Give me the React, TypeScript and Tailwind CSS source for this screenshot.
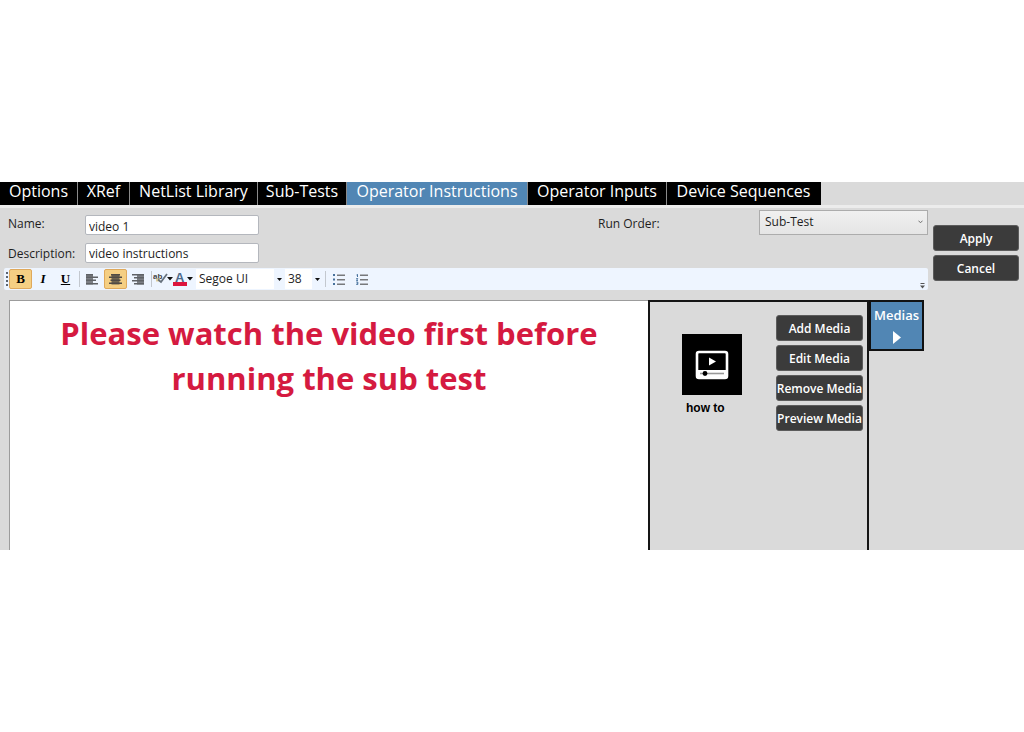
import React from 'react'

const tabs = [
	{ label: 'Options', width: 'w-[78px]' },
	{ label: 'XRef', width: 'w-[52px]' },
	{ label: 'NetList Library', width: 'w-[128px]' },
	{ label: 'Sub-Tests', width: 'w-[89px]' },
	{ label: 'Operator Instructions', width: 'w-[181px]' },
	{ label: 'Operator Inputs', width: 'w-[139px]' },
	{ label: 'Device Sequences', width: 'w-[154px]' },
]

const mediaActions = ['Add Media', 'Edit Media', 'Remove Media', 'Preview Media']

const App = () => {
	return (
		<div className="flex min-h-screen items-center bg-white font-['Open_Sans',sans-serif] text-[#1e1e1e]">
			<div className="flex w-full flex-col bg-[#dadada]">
				<TabBar />
				<div className="flex">
					<main className="min-w-0 flex-1">
						<InstructionForm />
						<Toolbar />
						<Workspace />
					</main>
					<div className="flex w-24 flex-col gap-1 px-[5px] pt-[17px]">
						<DarkButton>Apply</DarkButton>
						<DarkButton>Cancel</DarkButton>
					</div>
				</div>
			</div>
		</div>
	)
}

const TabBar = () => {
	return (
		<nav className="flex border-b-3 border-[#ececec]">
			{tabs.map((tab) => (
				<button
					key={tab.label}
					className={`${tab.width} h-[23px] shrink-0 border-r border-[#8a8a8a] pb-1 text-center text-[16px] leading-[19px] whitespace-nowrap text-white last:border-black ${tab.label === 'Operator Instructions' ? 'bg-[#5186b4]' : 'bg-black'}`}
				>
					{tab.label}
				</button>
			))}
		</nav>
	)
}

const DarkButton = ({ children }: { children: React.ReactNode }) => {
	return (
		<button className="flex h-[26px] w-full items-center justify-center rounded-[3px] border border-[#5c5c5c] bg-[#3b3b3b] pt-px text-[12px] leading-4 font-semibold whitespace-nowrap text-white">
			{children}
		</button>
	)
}

const InstructionForm = () => {
	return (
		<div className="flex h-[60px] justify-between pl-2 text-[12px] leading-4">
			<div className="flex flex-col gap-2 pt-[7px]">
				<div className="flex">
					<label htmlFor="name" className="w-[77px] pt-px">Name:</label>
					<input id="name" defaultValue="video 1" className="h-5 w-[174px] rounded-[2px] border border-[#b4b7bd] bg-white px-[3px] pt-[3px]" />
				</div>
				<div className="flex">
					<label htmlFor="description" className="w-[77px] pt-[3px]">Description:</label>
					<input id="description" defaultValue="video instructions" className="h-5 w-[174px] rounded-[2px] border border-[#b4b7bd] bg-white px-[3px] pt-px" />
				</div>
			</div>
			<div className="flex pt-0.5">
				<label htmlFor="order" className="w-[161px] pt-[6px]">Run Order:</label>
				<div className="relative h-[25px] w-[169px]">
					<select id="order" className="block h-full w-full appearance-none border border-[#acacac] bg-linear-to-b from-[#f0f0f0] to-[#e5e5e5] px-[5px] pb-px">
						<option>Sub-Test</option>
					</select>
					<svg className="pointer-events-none absolute top-[10px] right-[5px]" width="5" height="4" viewBox="0 0 5 4" fill="none" stroke="#707070">
						<path d="M.5.7 2.5 2.8 4.5.7" />
					</svg>
				</div>
			</div>
		</div>
	)
}

const Toolbar = () => {
	return (
		<div className="ml-1 flex h-[22px] items-center rounded-[2px] bg-[#eef5ff]">
			<svg width="5" height="14" viewBox="0 0 5 14" fill="#5b6470">
				<path d="M2 0h2v2H2zM2 4h2v2H2zM2 8h2v2H2zM2 12h2v2H2z" />
			</svg>
			<button aria-label="Bold" className="h-5 w-[23px] rounded-[2px] border border-[#dfa95c] bg-[#f5cf83] font-['Liberation_Serif',serif] text-[13px] leading-4 font-bold text-black">B</button>
			<button aria-label="Italic" className="h-5 w-[22px] font-['Liberation_Serif',serif] text-[13px] leading-4 font-bold text-black italic">I</button>
			<button aria-label="Underline" className="h-5 w-[23px] font-['Liberation_Serif',serif] text-[13px] leading-4 font-bold text-black underline">U</button>
			<Divider />
			<button aria-label="Align left" className="flex h-5 w-[23px] items-center justify-center">
				<svg width="13" height="11" viewBox="0 0 13 11" fill="#5f6266">
					<path d="M0 0h7v10.5H0z" opacity=".8" />
					<path d="M0 0h7v1.5H0zM0 2.5h12V4H0zM0 5.5h10V7H0zM0 9h12v1.5H0z" />
				</svg>
			</button>
			<button aria-label="Align center" className="flex h-5 w-[23px] items-center justify-center rounded-[2px] border border-[#dfa95c] bg-[#f5cf83]">
				<svg width="13" height="11" viewBox="0 0 13 11" fill="#4f4a44">
					<path d="M2.5 0h8v10.5h-8z" opacity=".8" />
					<path d="M2 0h9v1.5H2zM0 2.5h13V4H0zM1.5 5.5h10V7h-10zM0 8.5h13V10H0z" />
				</svg>
			</button>
			<button aria-label="Align right" className="flex h-5 w-[22px] items-center justify-center">
				<svg width="13" height="11" viewBox="0 0 13 11" fill="#5f6266">
					<path d="M5 0h7v10.5H5z" opacity=".8" />
					<path d="M0 0h12v1.5H0zM2 3h10v1.5H2zM0 6h12v1.5H0zM2 9h10v1.5H2z" />
				</svg>
			</button>
			<Divider />
			<button aria-label="Highlight" className="flex h-5 w-5 items-center">
				<svg width="20" height="16" viewBox="0 0 20 16">
					<text x="0" y="8" fontFamily="Liberation Sans" fontSize="8" fontWeight="bold" fill="#444">ab</text>
					<path d="M3 7.5h4v3H3z" fill="#e2cf9a" />
					<path d="M5 8.5 8 11 14 3" fill="none" stroke="#66717d" strokeWidth="1.8" />
					<path d="M14 6h6l-3 3.5z" fill="#111" />
				</svg>
			</button>
			<button aria-label="Font color" className="flex h-5 w-[23px] items-center">
				<svg width="20" height="16" viewBox="0 0 20 16">
					<text x="2" y="11" fontFamily="Liberation Sans" fontSize="13" fontWeight="bold" fill="#4c6a8c">A</text>
					<path d="M0 11h14v4H0z" fill="#dc143c" />
					<path d="M14 6h6l-3 3.5z" fill="#111" />
				</svg>
			</button>
			<Picker label="Font family" value="Segoe UI" width="w-[89px]" />
			<Picker label="Font size" value="38" width="w-[38px]" />
			<div className="mr-[7px] ml-[2px] h-4 w-px bg-[#c3c8cf]" />
			<button aria-label="Bullet list" className="flex h-5 w-[23px] items-center">
				<svg width="12" height="11" viewBox="0 0 12 11">
					<path d="M0 0h2v2H0zM0 4.5h2v2H0zM0 9h2v2H0z" fill="#46719c" />
					<path d="M4 .5h8V2H4zM4 5h8v1.5H4zM4 9.5h8V11H4z" fill="#77797c" />
				</svg>
			</button>
			<button aria-label="Numbered list" className="flex h-5 w-[23px] items-center">
				<svg width="12" height="11" viewBox="0 0 12 11">
					<path d="M.5 1 1.5.3V3M.3 4.5h1.4L.5 6.5h1.4M.3 8h1.5v2.5H.3M.6 9.2h1.2" fill="none" stroke="#46719c" strokeWidth="1" />
					<path d="M4 .5h8V2H4zM4 5h8v1.5H4zM4 9.5h8V11H4z" fill="#77797c" />
				</svg>
			</button>
			<svg className="mr-[3px] mb-[1px] ml-auto self-end" width="5" height="7" viewBox="0 0 5 7" fill="#555">
				<path d="M.5 1h4v1h-4zM0 3.5h5L2.5 6.5z" />
			</svg>
		</div>
	)
}

const Divider = () => {
	return <div className="mr-px ml-[2px] h-4 w-px bg-[#c3c8cf]" />
}

const Picker = ({ label, value, width }: { label: string; value: string; width: string }) => {
	return (
		<div className={`relative h-5 ${width}`}>
			<select aria-label={label} className="block h-full w-full appearance-none bg-white pl-[3px] text-[12px] leading-4">
				<option>{value}</option>
			</select>
			<span className="pointer-events-none absolute inset-y-0 right-0 flex w-[11px] items-center justify-center bg-[#eef5ff]">
				<svg width="5" height="3" viewBox="0 0 5 3" fill="#111">
					<path d="M0 0h5L2.5 3z" />
				</svg>
			</span>
		</div>
	)
}

const Workspace = () => {
	return (
		<div className="flex h-[260px] pt-[10px] pr-1 pl-[9px]">
			<div
				role="textbox"
				aria-label="Instructions"
				contentEditable
				suppressContentEditableWarning
				className="min-w-0 flex-1 border-t border-l border-[#9c9c9c] bg-white pt-[10px] text-center text-[31px] leading-[45px] font-bold whitespace-nowrap text-[#d51a40]"
			>
				Please watch the video first before<br />running the sub test
			</div>
			<section className="flex w-[221px] justify-between border-x-2 border-t-2 border-[#151515] pt-[13px] pr-1 pl-8">
				<figure className="w-[60px] pt-[19px]">
					<div className="flex h-[61px] items-center justify-center bg-black">
						<svg width="34" height="30" viewBox="0 0 34 30">
							<rect x="2" y="2" width="30" height="26" rx="2" fill="#000" stroke="#fff" strokeWidth="2.6" />
							<path d="M2 20h30v7H2z" fill="#fff" />
							<path d="M14 7.5v8l7-4z" fill="#fff" />
							<path d="M5 23.5h24" stroke="#999" strokeWidth="1.6" />
							<circle cx="10" cy="23.5" r="2.4" fill="#000" />
						</svg>
					</div>
					<figcaption className="pt-[5px] pl-1 font-['Liberation_Sans',sans-serif] text-[12px] leading-4 font-bold whitespace-nowrap text-black">how to</figcaption>
				</figure>
				<div className="flex w-[87px] flex-col gap-1">
					{mediaActions.map((action) => (
						<DarkButton key={action}>{action}</DarkButton>
					))}
				</div>
			</section>
			<button className="flex h-[51px] w-[55px] flex-col items-center border-2 border-[#111] bg-[#5186b4] pt-[5px] text-[13px] leading-4 font-semibold text-white">
				Medias
				<svg className="mt-2" width="8" height="13" viewBox="0 0 8 13" fill="#fff">
					<path d="M0 0 8 6.5 0 13z" />
				</svg>
			</button>
		</div>
	)
}

export default App
